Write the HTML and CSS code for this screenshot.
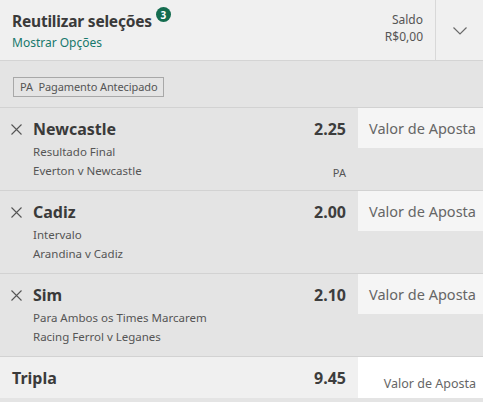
FILE: index.html
```html
<!DOCTYPE html>
<html lang="pt">
<head>
<meta charset="utf-8">
<link rel="stylesheet" href="styles.css">
</head>
<body>
<div class="slip">
  <div class="header">
    <div class="title-block">
      <div class="title-line">
        <span class="title">Reutilizar seleções</span>
        <span class="badge">3</span>
      </div>
      <div class="show-options">Mostrar Opções</div>
    </div>
    <div class="balance">
      <div>Saldo</div>
      <div>R$0,00</div>
    </div>
    <div class="toggle">
      <svg width="14" height="8" viewBox="0 0 14 8"><path d="M0.5 0.5 L7 7 L13.5 0.5" fill="none" stroke="#6a6a6a" stroke-width="1.2"/></svg>
    </div>
  </div>

  <div class="options">
    <span class="tag">PA&nbsp; Pagamento Antecipado</span>
  </div>

  <div class="bet">
    <div class="bet-main">
      <div class="bet-top">
        <svg class="close" width="11" height="11" viewBox="0 0 11 11"><path d="M0.5 0.5 L10.5 10.5 M10.5 0.5 L0.5 10.5" stroke="#555" stroke-width="1.1"/></svg>
        <span class="name">Newcastle</span>
        <span class="odds">2.25</span>
      </div>
      <div class="sub">Resultado Final</div>
      <div class="sub fixture"><span>Everton v Newcastle</span><span class="pa">PA</span></div>
    </div>
    <div class="stake">Valor de Aposta</div>
  </div>

  <div class="bet">
    <div class="bet-main">
      <div class="bet-top">
        <svg class="close" width="11" height="11" viewBox="0 0 11 11"><path d="M0.5 0.5 L10.5 10.5 M10.5 0.5 L0.5 10.5" stroke="#555" stroke-width="1.1"/></svg>
        <span class="name">Cadiz</span>
        <span class="odds">2.00</span>
      </div>
      <div class="sub">Intervalo</div>
      <div class="sub fixture"><span>Arandina v Cadiz</span></div>
    </div>
    <div class="stake">Valor de Aposta</div>
  </div>

  <div class="bet">
    <div class="bet-main">
      <div class="bet-top">
        <svg class="close" width="11" height="11" viewBox="0 0 11 11"><path d="M0.5 0.5 L10.5 10.5 M10.5 0.5 L0.5 10.5" stroke="#555" stroke-width="1.1"/></svg>
        <span class="name">Sim</span>
        <span class="odds">2.10</span>
      </div>
      <div class="sub">Para Ambos os Times Marcarem</div>
      <div class="sub fixture"><span>Racing Ferrol v Leganes</span></div>
    </div>
    <div class="stake">Valor de Aposta</div>
  </div>

  <div class="multi">
    <div class="multi-main">
      <span class="multi-name">Tripla</span>
      <span class="odds">9.45</span>
    </div>
    <div class="multi-stake">Valor de Aposta</div>
  </div>
</div>
</body>
</html>
```

FILE: styles.css
```css
* { box-sizing: border-box; }
html, body { margin: 0; padding: 0; }
body {
  width: 483px;
  height: 402px;
  overflow: hidden;
  font-family: "Segoe UI", "Noto Sans", "Open Sans", sans-serif;
  background: #e4e4e4;
  color: #555;
}
.slip { display: flex; flex-direction: column; }

.header {
  display: flex;
  height: 61px;
  background: #f0f0f0;
  border-bottom: 1px solid #d4d4d4;
}
.title-block {
  flex: 1;
  padding: 6px 0 0 12px;
}
.title-line { display: flex; align-items: flex-start; }
.title {
  font-size: 15.5px;
  font-weight: 700;
  color: #3a3a3a;
  line-height: 30px;
  letter-spacing: -0.2px;
}
.badge {
  margin: 1px 0 0 4px;
  width: 15px;
  height: 15px;
  border-radius: 50%;
  background: #146c4f;
  color: #fff;
  font-size: 10px;
  font-weight: 700;
  display: flex;
  align-items: center;
  justify-content: center;
  line-height: 1;
}
.show-options {
  font-size: 12px;
  color: #17786c;
  line-height: 14px;
  margin-top: 0;
}
.balance {
  padding: 11px 12px 0 0;
  text-align: right;
  font-size: 12px;
  line-height: 17px;
  color: #555;
}
.toggle {
  width: 48px;
  border-left: 1px solid #d8d8d8;
  display: flex;
  align-items: center;
  justify-content: center;
  padding-top: 2px;
}

.options {
  height: 47px;
  padding: 13px 0 0 13px;
  border-bottom: 1px solid #d2d2d2;
}
.tag {
  display: inline-block;
  height: 20px;
  padding: 0 6px;
  border: 1px solid #a8a8a8;
  font-size: 11px;
  line-height: 18px;
  color: #555;
  letter-spacing: -0.1px;
}

.bet {
  display: flex;
  height: 83px;
  border-bottom: 1px solid #d2d2d2;
}
.bet-main {
  flex: 1;
  padding: 10px 12px 0 11px;
}
.bet-top {
  display: flex;
  align-items: center;
  height: 22px;
  margin-bottom: 2px;
}
.close { margin-right: 11px; flex: none; }
.name {
  flex: 1;
  font-size: 16px;
  font-weight: 700;
  color: #3a3a3a;
}
.odds {
  font-size: 16px;
  font-weight: 700;
  color: #3d3d3d;
}
.sub {
  padding-left: 22px;
  font-size: 11.5px;
  line-height: 19px;
  color: #555;
}
.fixture { display: flex; justify-content: space-between; }
.pa { font-size: 11px; padding-top: 2px; }
.stake {
  width: 125px;
  height: 40px;
  background: #f5f5f5;
  font-size: 14.5px;
  color: #666;
  padding-left: 11px;
  line-height: 40px;
  white-space: nowrap;
}

.multi {
  display: flex;
  flex: 1;
  height: 45px;
  background: #f0f0f0;
}
.multi-main {
  flex: 1;
  display: flex;
  justify-content: space-between;
  padding: 10px 12px 0 12px;
}
.multi-name {
  font-size: 16px;
  font-weight: 700;
  color: #3a3a3a;
}
.multi-stake {
  width: 125px;
  height: 41px;
  background: #fff;
  font-size: 12.5px;
  color: #666;
  text-align: right;
  padding: 18px 7px 0 0;
  white-space: nowrap;
}
```
